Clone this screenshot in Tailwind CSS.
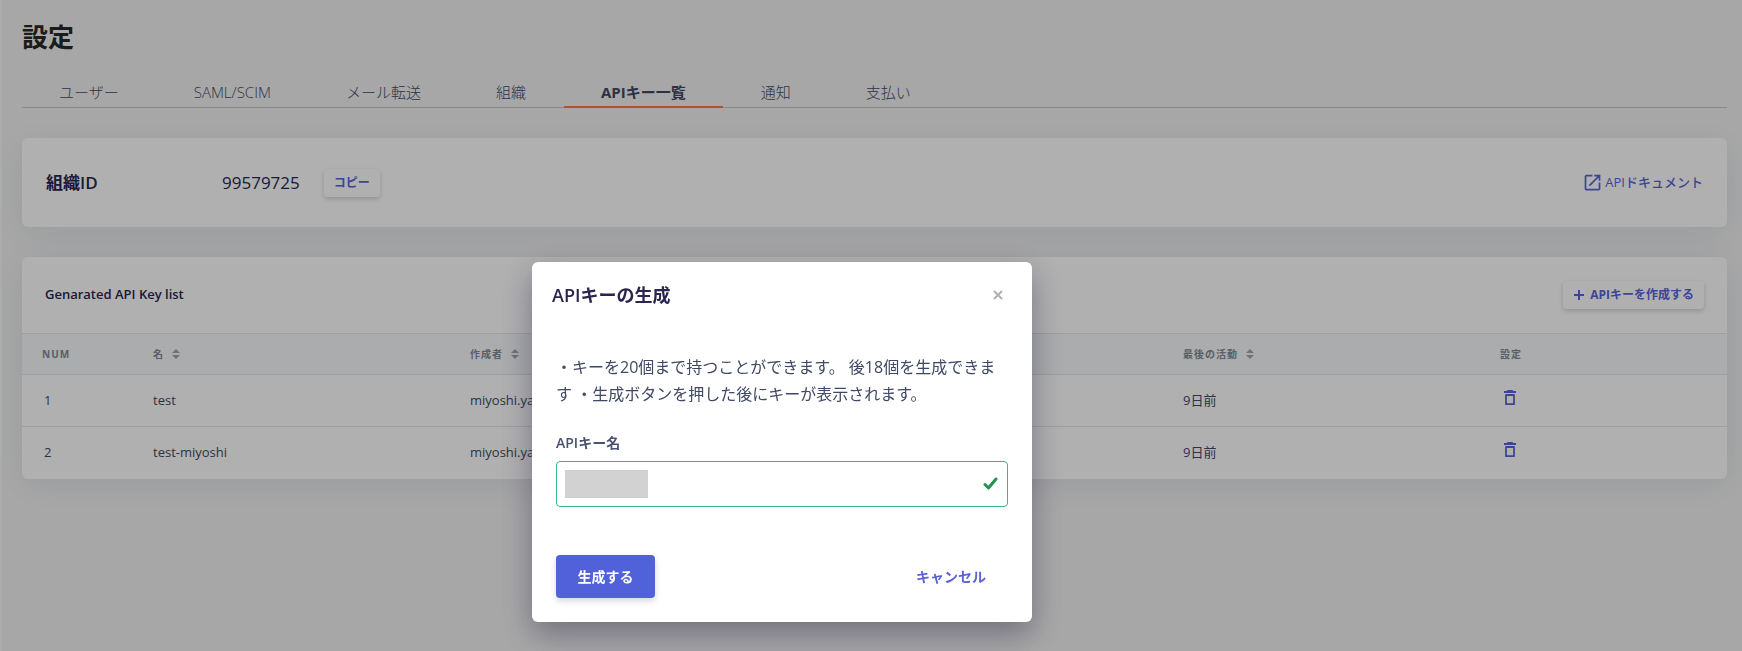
<!DOCTYPE html>
<html lang="ja">
<head>
    <meta charset="UTF-8">
    <meta name="viewport" content="width=device-width, initial-scale=1.0">
    <title>設定</title>
    <script src="https://cdn.jsdelivr.net/npm/@tailwindcss/browser@4"></script>
</head>
<body class="bg-[#f0f0f0] text-[#3f4864] min-h-screen font-['Open_Sans','Noto_Sans_CJK_JP',sans-serif] border-l-2 border-[#f6f6f6]">
    <div class="pl-5 pr-[15px] pt-4">
        <header>
            <h1 class="text-[26px] leading-[42px] font-bold text-[#282828]">設定</h1>
            <nav class="mt-4 flex gap-px border-b border-[#c4c4c4] text-[15px] leading-7 font-light">
                <a href="#" class="pt-1 px-[37px]">ユーザー</a>
                <a href="#" class="pt-1 px-[37px]">SAML/SCIM</a>
                <a href="#" class="pt-1 px-[37px]">メール転送</a>
                <a href="#" class="pt-1 px-[37px]">組織</a>
                <a href="#" class="pt-1 px-[37px] -mb-px font-bold border-b-2 border-[#fb7449]">APIキー一覧</a>
                <a href="#" class="pt-1 px-[37px]">通知</a>
                <a href="#" class="pt-1 px-[37px]">支払い</a>
            </nav>
        </header>

        <main>
            <!-- Organization ID -->
            <section class="mt-[30px] h-[89px] px-6 flex items-center bg-[#fdfdfd] rounded-md shadow-[0_6px_32px_rgba(60,80,105,0.1)] text-[#2a2550]">
                <h2 class="w-44 text-[17px] font-semibold">組織ID</h2>
                <span class="text-[17px]">99579725</span>
                <button type="button" class="ml-6 h-7 px-[10px] rounded bg-[#fdfdfd] text-xs font-bold text-[#5a62d6] shadow-[0_2px_5px_rgba(50,50,93,0.22)]">コピー</button>
                <a href="#" class="ml-auto flex items-center gap-0.5 text-[13px] font-medium text-[#5a62d6]">
                    <svg class="size-[21px]" viewBox="0 0 24 24" fill="currentColor"><path d="M19 19H5V5h7V3H5a2 2 0 0 0-2 2v14a2 2 0 0 0 2 2h14c1.1 0 2-.9 2-2v-7h-2v7zM14 3v2h3.59l-9.83 9.83 1.41 1.41L19 6.41V10h2V3h-7z"/></svg>
                    APIドキュメント
                </a>
            </section>

            <!-- API keys -->
            <section class="mt-[30px] bg-[#fdfdfd] rounded-md overflow-hidden shadow-[0_6px_32px_rgba(60,80,105,0.1)]">
                <div class="h-[76px] px-[23px] flex items-center justify-between">
                    <h2 class="text-[13px] font-semibold text-[#2a2550]">Genarated API Key list</h2>
                    <button type="button" class="h-7 px-[10px] flex items-center gap-[5px] rounded bg-[#fdfdfd] text-xs font-bold text-[#5a62d6] shadow-[0_2px_5px_rgba(50,50,93,0.22)]">
                        <svg class="size-3" viewBox="0 0 12 12" stroke="currentColor" stroke-width="2"><path d="M6 1v10M1 6h10"/></svg>
                        APIキーを作成する
                    </button>
                </div>
                <table class="w-full table-fixed text-left text-[13px]">
                    <thead class="bg-[#f4f6f8] text-[10px] tracking-[1px] text-[#7e8896]">
                        <tr class="h-[41px] border-t border-[#e2e4e7]">
                            <th class="w-[112px] px-5">NUM</th>
                            <th class="w-[317px] px-[19px]">
                                <span class="flex items-center gap-2">名
                                    <svg class="w-2 h-[10px]" viewBox="0 0 8 10" fill="#a0a4aa"><path d="M4 0l4 4H0zM4 10l4-4H0z"/></svg>
                                </span>
                            </th>
                            <th class="w-[713px] px-[19px]">
                                <span class="flex items-center gap-2">作成者
                                    <svg class="w-2 h-[10px]" viewBox="0 0 8 10" fill="#a0a4aa"><path d="M4 0l4 4H0zM4 10l4-4H0z"/></svg>
                                </span>
                            </th>
                            <th class="w-[316px] px-[19px]">
                                <span class="flex items-center gap-2">最後の活動
                                    <svg class="w-2 h-[10px]" viewBox="0 0 8 10" fill="#a0a4aa"><path d="M4 0l4 4H0zM4 10l4-4H0z"/></svg>
                                </span>
                            </th>
                            <th class="w-[247px] px-5">設定</th>
                        </tr>
                    </thead>
                    <tbody>
                        <tr class="h-[52px] border-t border-[#e2e4e7]">
                            <td class="px-[22px]">1</td>
                            <td class="px-[19px]">test</td>
                            <td class="px-[19px]">miyoshi.ya</td>
                            <td class="px-[19px]">9日前</td>
                            <td class="px-6">
                                <button type="button" aria-label="削除" class="block pb-1.5 text-[#5a62d6]">
                                    <svg class="w-3 h-4" viewBox="0 0 12 16" fill="none" stroke="currentColor"><path d="M0 2h12" stroke-width="2"/><path d="M3 1Q6-.5 9 1z" fill="currentColor"/><path d="M2 5h8v9.2H2z" stroke-width="1.8" stroke-linejoin="round"/></svg>
                                </button>
                            </td>
                        </tr>
                        <tr class="h-[52px] border-t border-[#e2e4e7]">
                            <td class="px-[22px]">2</td>
                            <td class="px-[19px]">test-miyoshi</td>
                            <td class="px-[19px]">miyoshi.ya</td>
                            <td class="px-[19px]">9日前</td>
                            <td class="px-6">
                                <button type="button" aria-label="削除" class="block pb-1.5 text-[#5a62d6]">
                                    <svg class="w-3 h-4" viewBox="0 0 12 16" fill="none" stroke="currentColor"><path d="M0 2h12" stroke-width="2"/><path d="M3 1Q6-.5 9 1z" fill="currentColor"/><path d="M2 5h8v9.2H2z" stroke-width="1.8" stroke-linejoin="round"/></svg>
                                </button>
                            </td>
                        </tr>
                    </tbody>
                </table>
            </section>
        </main>
    </div>

    <!-- Modal -->
    <div class="fixed inset-0 flex items-start justify-center pt-[262px] pr-[178px] bg-black/30">
        <form role="dialog" aria-labelledby="modal-title" class="w-[500px] rounded-md bg-white shadow-[0_12px_32px_rgba(30,25,55,0.4)]">
            <div class="h-[66px] pl-5 pr-[29px] flex items-center justify-between">
                <h2 id="modal-title" class="text-lg font-semibold text-[#2a2550]">APIキーの生成</h2>
                <button type="button" aria-label="閉じる" class="text-[#b0b0b0]">
                    <svg class="size-[10px]" viewBox="0 0 10 10" stroke="currentColor" stroke-width="2"><path d="M1 1l8 8M9 1l-8 8"/></svg>
                </button>
            </div>
            <div class="px-6 pt-[26px] pb-6">
                <p class="text-base leading-[27px] text-[#3f4864]">・キーを20個まで持つことができます。 後18個を生成できます ・生成ボタンを押した後にキーが表示されます。</p>
                <label for="key-name" class="block mt-[25px] mb-[9px] text-sm leading-[19px] font-semibold text-[#4a5370]">APIキー名</label>
                <div class="relative">
                    <input id="key-name" type="text" class="block w-full h-[46px] px-2 rounded border border-[#3cb489] bg-white outline-none">
                    <span class="absolute left-[9px] top-[9px] w-[83px] h-7 bg-[#d2d2d2]"></span>
                    <svg class="absolute right-[10px] top-4 w-[15px] h-[13px]" viewBox="0 0 15 13" fill="none" stroke="#24934f" stroke-width="3" stroke-linecap="round" stroke-linejoin="round"><path d="M2 7.500l3.500 3.500L13 2"/></svg>
                </div>
                <div class="mt-12 flex items-center justify-between">
                    <button type="submit" class="w-[99px] h-[43px] rounded bg-[#5161da] text-sm font-bold text-white shadow-[0_3px_6px_rgba(50,50,93,0.2)]">生成する</button>
                    <button type="button" class="h-[43px] px-[22px] text-sm font-bold text-[#5a62d6]">キャンセル</button>
                </div>
            </div>
        </form>
    </div>
</body>
</html>
